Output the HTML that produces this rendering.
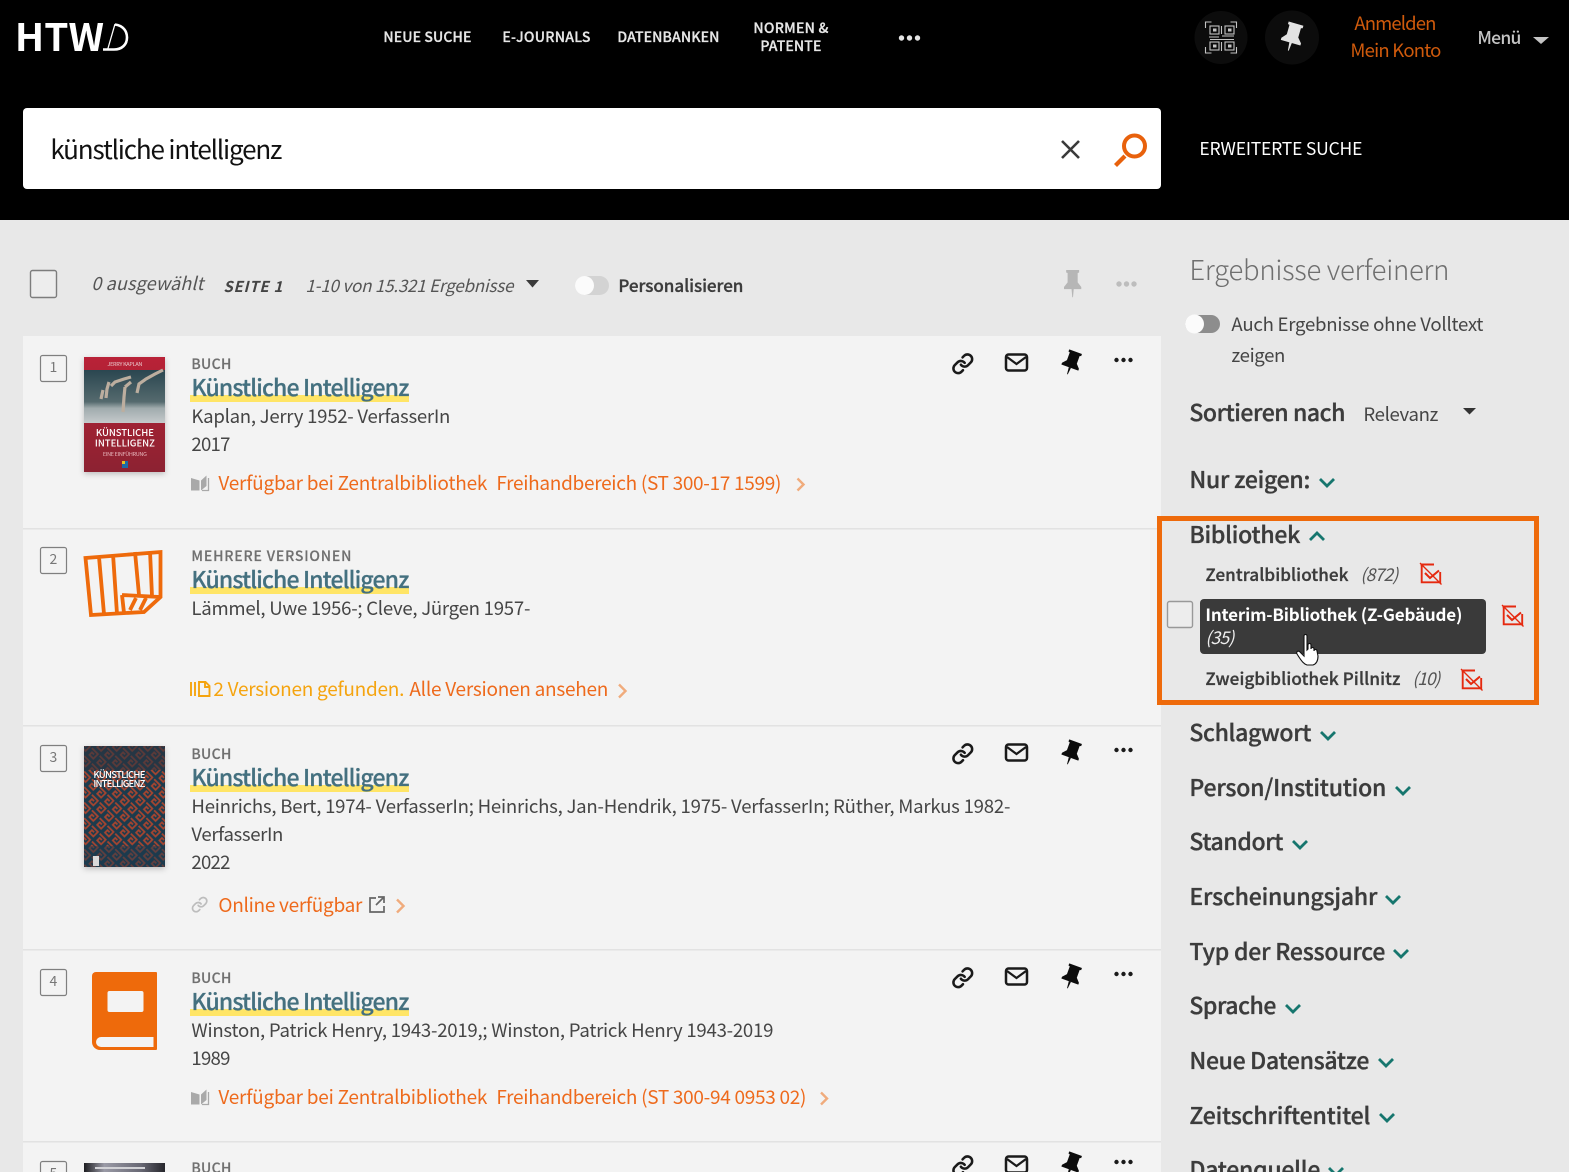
<!DOCTYPE html>
<html lang="de"><head><meta charset="utf-8"><title>HTWD Suche</title>
<style>
html,body{margin:0;padding:0;background:#e8e8e8;width:1569px;height:1172px;overflow:hidden}
svg{display:block;font-family:"Noto Sans CJK SC","Liberation Sans",sans-serif}
text{transform:translate(.4px,1px)}
.nav{font-size:14px;font-weight:500;fill:#e6e6e6;stroke:#e6e6e6;stroke-width:.3}
.ty{font-size:14px;font-weight:500;fill:#707070;stroke:#707070;stroke-width:.2}
.ti{font-size:23px;font-weight:500;fill:#44707f;stroke:#44707f;stroke-width:.25}
.tx{font-size:18.600px;fill:#454545}
.or{font-size:19px;fill:#ee6a1c}
.fa{font-size:23px;font-weight:500;fill:#3c3c3c;stroke:#3c3c3c;stroke-width:.35}
.fi{font-size:17px;font-weight:500;fill:#3c3c3c;stroke:#3c3c3c;stroke-width:.35}
.cnt{font-size:17.500px;font-style:italic;fill:#555}
.chev{fill:none;stroke:#16766e;stroke-width:2.800;transform:translateY(1px)}
.ochev{fill:none;stroke:#f0ab7c;stroke-width:2.400;transform:translateY(.5px)}
</style></head><body>
<svg width="1569" height="1172" viewBox="0 0 1569 1172" xmlns="http://www.w3.org/2000/svg">
<defs>
<path id="pin" d="M3 0h18v3l-2 .5v11l5 5.500v2.500H0V20l5-5.500V3.500L3 3zM10.500 22.500h3L12.500 32h-1z"/>
<g id="lnk" fill="none" stroke-linecap="round"><path d="M10 13a5 5 0 0 0 7.540.54l3-3a5 5 0 0 0-7.070-7.070l-1.720 1.710"/><path d="M14 11a5 5 0 0 0-7.540-.54l-3 3a5 5 0 0 0 7.070 7.070l1.710-1.710"/></g>
<g id="acts">
<use href="#lnk" transform="translate(951.500 .5) scale(.94)" stroke="#1a1a1a" stroke-width="2.700"/>
<rect x="1006" y="2.500" width="21" height="16" rx="2.500" fill="none" stroke="#1a1a1a" stroke-width="2.500"/>
<path d="M1007 5l9.500 7 9.500-7" fill="none" stroke="#1a1a1a" stroke-width="2.300"/>
<use href="#pin" transform="translate(1062.500 -1) rotate(20 9 12) scale(.75)" fill="#0c0c0c"/>
<circle cx="1116.500" cy="8" r="2.200" fill="#1a1a1a"/><circle cx="1123.500" cy="8" r="2.200" fill="#1a1a1a"/><circle cx="1130.500" cy="8" r="2.200" fill="#1a1a1a"/>
</g>
<g id="rd" fill="none" stroke="#e5290f" stroke-width="1.900">
<path d="M.5 1.500h13.500M1.700 1v18.300h18.500V9"/><path d="M0 0l21.500 21.500" stroke-width="1.300"/><path d="M5 10l5 5 9-7.500" stroke-width="2.100"/>
</g>
<g id="bk"><path d="M0 3l8.500 2.500V15.500H0z" fill="#a9a9a9"/><path d="M10 5.500l5.500-5v10.500L10 15.500z" fill="#a9a9a9"/><path d="M17.500 3v12.500H11" fill="none" stroke="#a9a9a9" stroke-width="1.300"/></g>
<pattern id="maze" width="11" height="11" patternUnits="userSpaceOnUse" patternTransform="rotate(45)">
<rect width="11" height="11" fill="#1c3a4e"/>
<path d="M0 2h8.500v6.500H3V5h3" fill="none" stroke="#a8452f" stroke-width="1.700"/>
</pattern>
<filter id="sh" x="-20%" y="-20%" width="140%" height="140%"><feDropShadow dx="0" dy="2" stdDeviation="3" flood-color="#000" flood-opacity=".22"/></filter>
<linearGradient id="g1" x1="0" y1="0" x2="0" y2="1"><stop offset="0" stop-color="#2a4650"/><stop offset=".6" stop-color="#556a6e"/><stop offset=".72" stop-color="#a0abad"/><stop offset="1" stop-color="#c5cacb"/></linearGradient>
<linearGradient id="g2" x1="0" y1="0" x2="0" y2="1"><stop offset="0" stop-color="#b92137"/><stop offset="1" stop-color="#8c2231"/></linearGradient>
<linearGradient id="g5" x1="0" y1="0" x2="1" y2="0"><stop offset="0" stop-color="#1c1c20"/><stop offset=".25" stop-color="#9a9aa6"/><stop offset=".7" stop-color="#686874"/><stop offset="1" stop-color="#26262c"/></linearGradient>
</defs>

<!-- header -->
<rect width="1569" height="220" fill="#000"/>
<text x="14.500" y="50" font-size="38" font-weight="700" fill="#fff" textLength="89" lengthAdjust="spacingAndGlyphs">HTW</text>
<path d="M115 24.500C123 25.500 127 31 127 37.500 127 44.500 122 49.500 114 49.500H103" fill="none" stroke="#fff" stroke-width="2.600"/>
<path d="M115 24L107.500 50" fill="none" stroke="#fff" stroke-width="1.300"/>
<text class="nav" x="383" y="41" textLength="88">NEUE SUCHE</text>
<text class="nav" x="502" y="41" textLength="88">E-JOURNALS</text>
<text class="nav" x="617" y="41" textLength="102">DATENBANKEN</text>
<text class="nav" x="753" y="32" textLength="75">NORMEN &amp;</text>
<text class="nav" x="760" y="50" textLength="61">PATENTE</text>
<circle cx="901.500" cy="38" r="2.700" fill="#e4e4e4"/><circle cx="909.500" cy="38" r="2.700" fill="#e4e4e4"/><circle cx="917.500" cy="38" r="2.700" fill="#e4e4e4"/>
<circle cx="1221" cy="37.500" r="26.500" fill="#0c0c0c"/><circle cx="1292" cy="37.500" r="27" fill="#0c0c0c"/>
<g fill="none" stroke="#c4c4c4" stroke-width="1.100">
<path d="M1205.500 28v-6h6M1230.500 22h6v6M1205.500 47v6h6M1230.500 53h6v-6"/>
<rect x="1210" y="26" width="9" height="8"/><rect x="1225" y="26" width="9" height="8"/><rect x="1210" y="42" width="9" height="8"/><rect x="1225" y="42" width="9" height="8"/>
<path d="M1209 37h10M1222 36h12M1210 39.500h24M1221.500 26v8M1221.500 42v9"/>
</g>
<g fill="#c4c4c4"><rect x="1213" y="28.500" width="3.500" height="3"/><rect x="1228" y="28.500" width="3.500" height="3"/><rect x="1213" y="44.500" width="3.500" height="3"/><rect x="1228" y="44.500" width="3.500" height="3"/></g>
<use href="#pin" transform="translate(1282 23) rotate(16 10 14) scale(.85 .88)" fill="#e2e2e2"/>
<text x="1354" y="29" font-size="18.500" fill="#cf5a0c" textLength="82">Anmelden</text>
<text x="1350" y="56" font-size="18.500" fill="#cf5a0c" textLength="91">Mein Konto</text>
<text x="1477" y="43" font-size="17.500" font-weight="500" fill="#c4c4c4" textLength="44">Menü</text>
<path d="M1533 37h16l-8 7z" fill="#c4c4c4"/>

<!-- search -->
<rect x="23" y="108" width="1138" height="81" rx="4" fill="#fff"/>
<text x="50" y="158" font-size="26" fill="#111" textLength="232">künstliche intelligenz</text>
<path d="M1062 141l17 17M1079 141l-17 17" stroke="#3a3a3a" stroke-width="2.600"/>
<circle cx="1134.500" cy="146" r="10.500" fill="none" stroke="#e8610c" stroke-width="4"/>
<path d="M1125 156l-9.500 9.500" stroke="#e8610c" stroke-width="4.200"/>
<text x="1199" y="154" font-size="17.500" fill="#fff" textLength="163">ERWEITERTE SUCHE</text>

<!-- toolbar -->
<rect x="30.500" y="270.500" width="26" height="27" rx="2" fill="#ededed" stroke="#7d7d7d" stroke-width="1.400"/>
<text x="91" y="289" font-size="18" font-style="italic" fill="#555" textLength="112">0 ausgewählt</text>
<text x="223" y="291" font-size="15" font-style="italic" font-weight="700" fill="#444" textLength="59">SEITE 1</text>
<text x="305" y="291" font-size="17" font-style="italic" fill="#555" textLength="208">1-10 von 15.321 Ergebnisse</text>
<path d="M526 280h13l-6.500 7.500z" fill="#3a3a3a"/>
<rect x="575" y="276" width="34" height="19" rx="9.500" fill="#d3d3d3"/>
<circle cx="584.500" cy="285.500" r="9.500" fill="#fbfbfb"/>
<text class="fi" x="618" y="291" textLength="125">Personalisieren</text>
<use href="#pin" transform="translate(1064 270) scale(.72 .85)" fill="#b6b6b6"/>
<circle cx="1119" cy="284" r="2.700" fill="#bdbdbd"/><circle cx="1126.500" cy="284" r="2.700" fill="#bdbdbd"/><circle cx="1134" cy="284" r="2.700" fill="#bdbdbd"/>

<!-- results -->
<rect x="23" y="336" width="1138" height="836" fill="#f3f3f3"/>
<g fill="#e2e2e2"><rect x="23" y="528" width="1138" height="1.500"/><rect x="23" y="725" width="1138" height="1.500"/><rect x="23" y="949" width="1138" height="1.500"/><rect x="23" y="1141" width="1138" height="1.500"/></g>

<g fill="none" stroke="#7f7f7f" stroke-width="1.200">
<rect x="40.500" y="355.500" width="26" height="26" rx="2"/><rect x="40.500" y="547.500" width="26" height="26" rx="2"/><rect x="40.500" y="745.500" width="26" height="26" rx="2"/><rect x="40.500" y="969.500" width="26" height="26" rx="2"/><rect x="40.500" y="1161.500" width="26" height="26" rx="2"/>
</g>
<g font-size="14" fill="#777" text-anchor="middle"><text x="53" y="371">1</text><text x="53" y="563">2</text><text x="53" y="761">3</text><text x="53" y="985">4</text><text x="53" y="1177">5</text></g>

<!-- cover 1 -->
<g filter="url(#sh)"><rect x="84" y="357" width="81" height="115" fill="url(#g2)"/></g>
<rect x="84" y="370" width="81" height="53" fill="url(#g1)"/>
<path d="M101 399l2-9 M106 398l1-9 2-7 M111 386l4-4 9-3 7-2 M123 412l1-15 1-10 M125 387l6-5 M137 393l2-9 7-5 9-5 8-4" fill="none" stroke="#bcae9f" stroke-width="3.200"/>
<text x="124.500" y="365" font-size="5.500" fill="#e9c9cd" text-anchor="middle" textLength="35">JERRY KAPLAN</text>
<text x="124.500" y="435" font-size="9.500" font-weight="500" fill="#fff" text-anchor="middle" textLength="58">KÜNSTLICHE</text>
<text x="124.500" y="445.500" font-size="9.500" font-weight="500" fill="#fff" text-anchor="middle" textLength="60">INTELLIGENZ</text>
<text x="124.500" y="455" font-size="5.500" fill="#e8b7bd" text-anchor="middle" textLength="44">EINE EINFÜHRUNG</text>
<rect x="122" y="461" width="6" height="7" fill="#1c6aa8"/><rect x="122" y="461" width="3" height="3" fill="#e8c020"/>

<!-- card 1 -->
<text class="ty" x="191" y="368" textLength="40">BUCH</text>
<rect x="190" y="395" width="219" height="7" fill="#ffe566"/>
<text class="ti" x="191" y="395" textLength="218">Künstliche Intelligenz</text>
<text class="tx" x="191" y="422" textLength="259">Kaplan, Jerry 1952- VerfasserIn</text>
<text class="tx" x="191" y="450" textLength="39">2017</text>
<use href="#bk" x="191" y="475"/>
<text class="or" x="218" y="489" textLength="269">Verfügbar bei Zentralbibliothek</text>
<text class="or" x="496" y="489" textLength="285">Freihandbereich (ST 300-17 1599)</text>
<path class="ochev" d="M797.500 478l6 6-6 6"/>
<use href="#acts" y="352"/>

<!-- card 2 -->
<path d="M91 615L85.500 558L160.500 552V597L144 612zM99 557l5 57M113 554l4 60M135 552l4 43M150 551l2 45M122 595l38 2M122 595l2 18M130 610l6-12M140 610l6-12" fill="none" stroke="#ee6a0b" stroke-width="3.800"/>
<text class="ty" x="191" y="560" textLength="160">MEHRERE VERSIONEN</text>
<rect x="190" y="587" width="219" height="7" fill="#ffe566"/>
<text class="ti" x="191" y="587" textLength="218">Künstliche Intelligenz</text>
<text class="tx" x="191" y="614" textLength="339">Lämmel, Uwe 1956-; Cleve, Jürgen 1957-</text>
<g fill="none" stroke="#f5a40f" stroke-width="1.900"><path d="M191 682v14M195 682v14M199 682h6.500l4 4v10H199zM205 682v5h4"/></g>
<text x="213" y="695" font-size="19" fill="#f5a40f" textLength="191">2 Versionen gefunden.</text>
<text class="or" x="409" y="695" textLength="199">Alle Versionen ansehen</text>
<path class="ochev" d="M619 684l6.500 6.500-6.500 6.500"/>

<!-- cover 3 -->
<g filter="url(#sh)"><rect x="84" y="746" width="81" height="121" fill="url(#maze)"/></g>
<rect x="84" y="746" width="81" height="24" fill="#2c3440" opacity=".6"/>
<rect x="84" y="846" width="81" height="21" fill="#1c3a4e" opacity=".5"/>
<text x="93" y="777" font-size="9.500" font-weight="500" fill="#fff" textLength="52">KÜNSTLICHE</text>
<text x="93" y="786" font-size="9.500" font-weight="500" fill="#fff" textLength="52">INTELLIGENZ</text>
<rect x="93" y="856" width="6" height="10" fill="#d9d9d9"/>

<!-- card 3 -->
<text class="ty" x="191" y="758" textLength="40">BUCH</text>
<rect x="190" y="785" width="219" height="7" fill="#ffe566"/>
<text class="ti" x="191" y="785" textLength="218">Künstliche Intelligenz</text>
<text class="tx" x="191" y="812" textLength="819">Heinrichs, Bert, 1974- VerfasserIn; Heinrichs, Jan-Hendrik, 1975- VerfasserIn; Rüther, Markus 1982-</text>
<text class="tx" x="191" y="840" textLength="92">VerfasserIn</text>
<text class="tx" x="191" y="868" textLength="39">2022</text>
<use href="#lnk" transform="translate(191 896) scale(.72)" stroke="#bdbdbd" stroke-width="2.400"/>
<text class="or" x="218" y="911" textLength="144">Online verfügbar</text>
<path d="M376 898h-6v14h14v-6M378 897h6v6M384 897l-8 8" fill="none" stroke="#666" stroke-width="1.700"/>
<path class="ochev" d="M397 899l6.500 6.500-6.500 6.500"/>

<!-- card 4 -->
<path d="M96 972h60a1 1 0 0 1 1 1v76a1 1 0 0 1-1 1H100a8 8 0 0 1-8-8V976a4 4 0 0 1 4-4z" fill="#ee6a0b"/>
<rect x="107.500" y="991" width="36" height="21" rx="2" fill="#f3f3f3"/>
<path d="M101 1037h52.500v10H101a5 5 0 0 1 0-10z" fill="#f3f3f3"/>
<text class="ty" x="191" y="982" textLength="40">BUCH</text>
<rect x="190" y="1009" width="219" height="7" fill="#ffe566"/>
<text class="ti" x="191" y="1009" textLength="218">Künstliche Intelligenz</text>
<text class="tx" x="191" y="1036" textLength="582">Winston, Patrick Henry, 1943-2019,; Winston, Patrick Henry 1943-2019</text>
<text class="tx" x="191" y="1064" textLength="39">1989</text>
<use href="#bk" x="191" y="1089"/>
<text class="or" x="218" y="1103" textLength="269">Verfügbar bei Zentralbibliothek</text>
<text class="or" x="496" y="1103" textLength="310">Freihandbereich (ST 300-94 0953 02)</text>
<path class="ochev" d="M821 1092l6 6-6 6"/>

<!-- card 5 -->
<rect x="84" y="1163" width="81" height="9" fill="url(#g5)"/>
<rect x="95" y="1167" width="50" height="2" fill="#d2d2d6"/>
<text class="ty" x="191" y="1172" textLength="40">BUCH</text>

<!-- action rows -->
<use href="#acts" y="742"/>
<use href="#acts" y="966"/>
<use href="#acts" y="1154"/>

<!-- sidebar -->
<text x="1189" y="279" font-size="27.500" font-weight="300" fill="#6f6f6f" textLength="260">Ergebnisse verfeinern</text>
<rect x="1185" y="315" width="35" height="18" rx="9" fill="#8d8d8d"/>
<circle cx="1194.500" cy="324" r="9.500" fill="#fbfbfb"/>
<text class="tx" x="1231" y="330" textLength="252">Auch Ergebnisse ohne Volltext</text>
<text class="tx" x="1231" y="361" textLength="54">zeigen</text>
<text class="fa" x="1189" y="420" textLength="156">Sortieren nach</text>
<text class="tx" x="1363" y="420" textLength="75">Relevanz</text>
<path d="M1463 408h13l-6.500 6.500z" fill="#333"/>
<text class="fa" x="1189" y="487" textLength="121">Nur zeigen:</text>
<path class="chev" d="M1320 478l7 7 7-7"/>

<rect x="1159.500" y="518.500" width="377" height="184" fill="none" stroke="#ee6a0b" stroke-width="5"/>
<text class="fa" x="1189" y="542" textLength="111">Bibliothek</text>
<path class="chev" d="M1310 539l7-7 7 7"/>
<text class="fi" x="1205" y="580" textLength="143">Zentralbibliothek</text>
<text class="cnt" x="1360" y="580" textLength="38">(872)</text>
<use href="#rd" x="1420" y="563"/>
<rect x="1167.500" y="601.500" width="25" height="26" rx="2" fill="#ededed" stroke="#999" stroke-width="1.400"/>
<rect x="1200" y="599" width="286" height="55" rx="4" fill="#3a3a3a"/>
<text x="1205" y="620" font-size="17" font-weight="700" fill="#fff" textLength="257">Interim-Bibliothek (Z-Gebäude)</text>
<text x="1205" y="643" font-size="17.500" font-style="italic" fill="#f0f0f0" textLength="29">(35)</text>
<use href="#rd" x="1502" y="605"/>
<text class="fi" x="1205" y="684" textLength="195">Zweigbibliothek Pillnitz</text>
<text class="cnt" x="1412" y="684" textLength="28">(10)</text>
<use href="#rd" x="1461" y="669"/>
<path d="M1304 636c0-2 3-2 3 0v14l1-1v-4c0-2 3-2 3 0v4c0-2 3-2 3 0v2c0-2 3-2 3 0l1 5c0 5-2 8-5 9h-6c-3-1-5-3-10-11-1-2 1-4 3-2l4 4z" fill="#fff" stroke="#111" stroke-width="1.100"/>

<text class="fa" x="1189" y="740" textLength="122">Schlagwort</text><path class="chev" d="M1321 731l7 7 7-7"/>
<text class="fa" x="1189" y="795" textLength="197">Person/Institution</text><path class="chev" d="M1396 786l7 7 7-7"/>
<text class="fa" x="1189" y="849" textLength="94">Standort</text><path class="chev" d="M1293 840l7 7 7-7"/>
<text class="fa" x="1189" y="904" textLength="188">Erscheinungsjahr</text><path class="chev" d="M1386 895l7 7 7-7"/>
<text class="fa" x="1189" y="959" textLength="196">Typ der Ressource</text><path class="chev" d="M1394 949l7 7 7-7"/>
<text class="fa" x="1189" y="1013" textLength="87">Sprache</text><path class="chev" d="M1286 1004l7 7 7-7"/>
<text class="fa" x="1189" y="1068" textLength="180">Neue Datensätze</text><path class="chev" d="M1379 1058l7 7 7-7"/>
<text class="fa" x="1189" y="1123" textLength="181">Zeitschriftentitel</text><path class="chev" d="M1380 1113l7 7 7-7"/>
<text class="fa" x="1189" y="1177" textLength="131">Datenquelle</text><path class="chev" d="M1329 1167l7 7 7-7"/>
</svg>
</body></html>
